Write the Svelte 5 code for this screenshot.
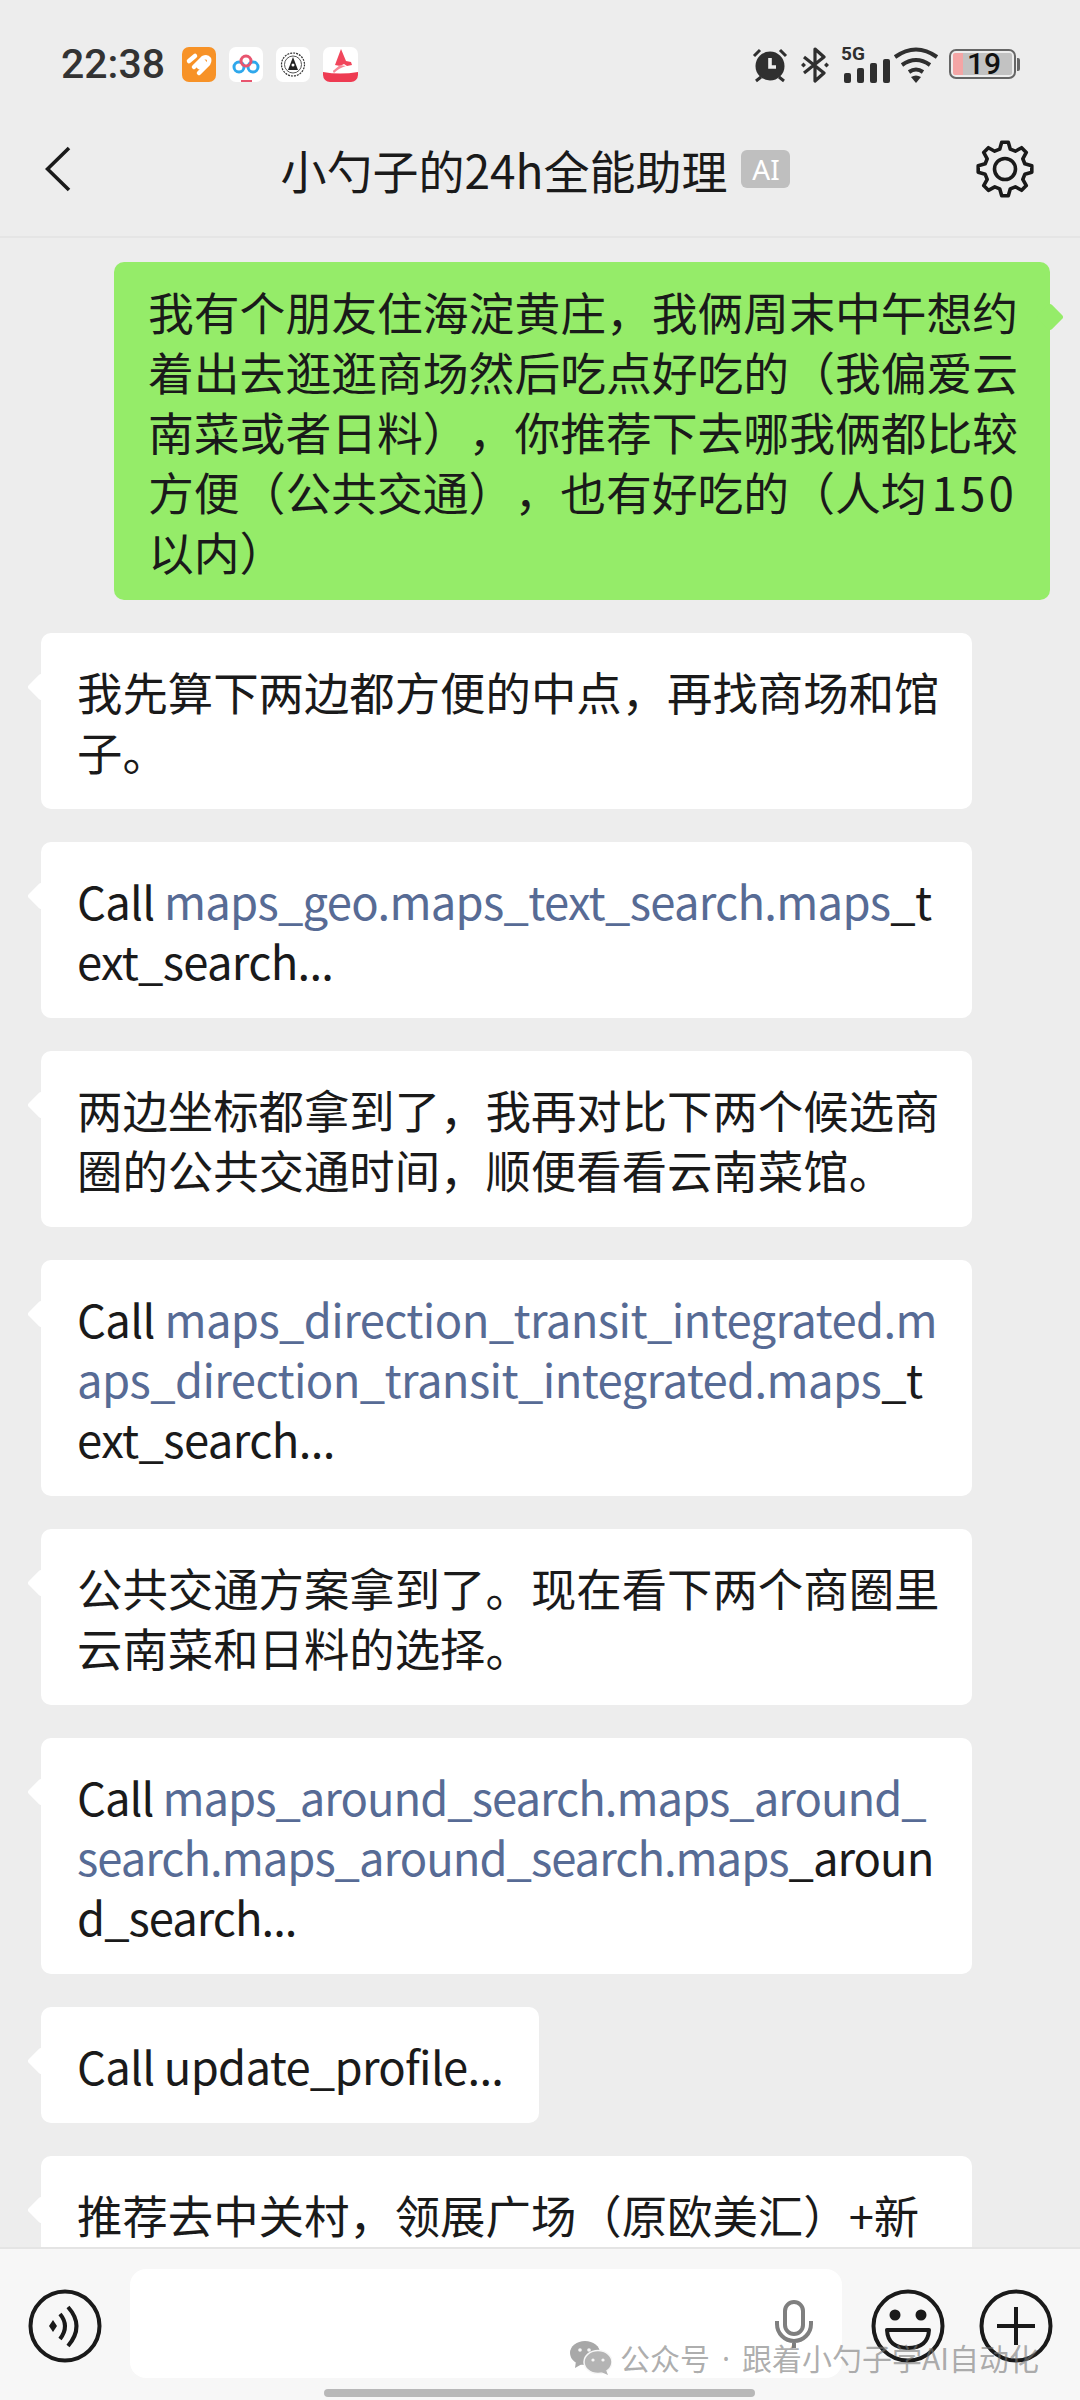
<script>
	const plain = (t) => ({ t, link: false });
	const link = (t) => ({ t, link: true });

	const messages = [
		{ lines: [[plain('我先算下两边都方便的中点，再找商场和馆')], [plain('子。')]] },
		{ lines: [[plain('Call '), link('maps_geo.maps_text_search.maps'), plain('_t')], [plain('ext_search...')]], spacing: 'latin' },
		{ lines: [[plain('两边坐标都拿到了，我再对比下两个候选商')], [plain('圈的公共交通时间，顺便看看云南菜馆。')]] },
		{
			lines: [
				[plain('Call '), link('maps_direction_transit_integrated.m')],
				[link('aps_direction_transit_integrated.maps'), plain('_t')],
				[plain('ext_search...')]
			],
			spacing: 'loose'
		},
		{ lines: [[plain('公共交通方案拿到了。现在看下两个商圈里')], [plain('云南菜和日料的选择。')]] },
		{
			lines: [
				[plain('Call '), link('maps_around_search.maps_around_')],
				[link('search.maps_around_search.maps'), plain('_aroun')],
				[plain('d_search...')]
			],
			spacing: 'tight'
		},
		{ lines: [[plain('Call update_profile...')]], short: true, spacing: 'latin' },
		{ lines: [[plain('推荐去中关村，领展广场（原欧美汇）+新')]] }
	];

	const question = [
		'我有个朋友住海淀黄庄，我俩周末中午想约',
		'着出去逛逛商场然后吃点好吃的（我偏爱云',
		'南菜或者日料），你推荐下去哪我俩都比较'
	];

	// 8 toothed outline for the settings gear
	function gearPath(cx, cy, outer, inner) {
		const pts = [];
		for (let i = 0; i < 8; i++) {
			const a = (i * 45 - 90) * (Math.PI / 180);
			for (const [d, r] of [[-15, inner], [-7, outer], [7, outer], [15, inner]]) {
				const b = a + (d * Math.PI) / 180;
				pts.push(`${(cx + r * Math.cos(b)).toFixed(1)} ${(cy + r * Math.sin(b)).toFixed(1)}`);
			}
		}
		return 'M' + pts.join('L') + 'Z';
	}
</script>

<div class="screen">
	<div class="status">
		<span class="time">22:38</span>
		<div class="apps">
			<svg width="34" height="35" viewBox="0 0 34 35">
				<rect width="34" height="35" rx="7" fill="#f79227" />
				<path d="M7 14l6-5M12 20l9-9q4-2 6 1q1 3-2 6l-8 8M17 20l5-5" fill="none" stroke="#fff" stroke-width="4.5" stroke-linecap="round" />
			</svg>
			<svg width="34" height="35" viewBox="0 0 34 35">
				<rect width="34" height="35" rx="7" fill="#fff" />
				<circle cx="10" cy="20" r="5" fill="none" stroke="#2fa8ec" stroke-width="3" />
				<circle cx="24" cy="20" r="5" fill="none" stroke="#2fa8ec" stroke-width="3" />
				<circle cx="17" cy="14" r="5" fill="none" stroke="#e8556f" stroke-width="3" />
				<rect x="12" y="33" width="11" height="2" fill="#e8556f" />
			</svg>
			<svg width="34" height="35" viewBox="0 0 34 35">
				<rect width="34" height="35" rx="7" fill="#fff" />
				<circle cx="17" cy="17.5" r="11.5" fill="none" stroke="#333" stroke-width="1.2" stroke-dasharray="2 1" />
				<circle cx="17" cy="17.5" r="8.5" fill="none" stroke="#555" stroke-width="1" />
				<path d="M17 10l5 13H12z" fill="#222" />
				<circle cx="17" cy="18" r="1.5" fill="#fff" />
			</svg>
			<svg width="35" height="35" viewBox="0 0 35 35">
				<rect width="35" height="35" rx="7" fill="#fff" />
				<path d="M18 2l5 12 5 1 1 3-5 1-3-2-4 2-5-1z" fill="#f1465c" />
				<path d="M17 18l6 1q-7 2-12 7-2-2 0-3z" fill="#f78a98" />
				<path d="M0 25q17 3 35 0v3a7 7 0 0 1-7 7H7a7 7 0 0 1-7-7z" fill="#ee3b52" />
			</svg>
		</div>
		<div class="sys">
			<svg class="alarm" width="36" height="36" viewBox="0 0 36 36">
				<circle cx="18" cy="19" r="14.5" fill="#2f2f2f" />
				<path d="M18 11v9h6" fill="none" stroke="#eee" stroke-width="3.6" />
				<path d="M2 9l6-6M34 9l-6-6M4 34l5-4M32 34l-5-4" stroke="#2f2f2f" stroke-width="3" fill="none" />
			</svg>
			<svg class="bt" width="30" height="36" viewBox="0 0 30 36">
				<path d="M4 10l20 16-9 8V2l9 8L4 26" fill="none" stroke="#2f2f2f" stroke-width="3.2" stroke-linejoin="round" />
				<path d="M1 18l2.5-2.5L6 18l-2.500 2.500zM24 18l2.500-2.500L29 18l-2.500 2.500z" fill="#2f2f2f" />
			</svg>
			<div class="signal">
				<span class="g5">5G</span>
				<div class="bars"><i class="b1"></i><i class="b2"></i><i class="b3"></i><i class="b4"></i></div>
			</div>
			<svg class="wifi" width="46" height="36" viewBox="0 0 46 36">
				<path d="M2 10q21-15 42 0M9 18q14-10 28 0M16 25q7-5 14 0" fill="none" stroke="#2f2f2f" stroke-width="4" />
				<path d="M18 30q5-3 10 0l-5 6z" fill="#2f2f2f" />
			</svg>
			<div class="battery">
				<div class="shell">
					<div class="low"></div>
					<div class="rest"></div>
					<span>19</span>
				</div>
				<div class="tip"></div>
			</div>
		</div>
	</div>

	<header>
		<svg class="back" width="26" height="46" viewBox="0 0 26 46">
			<path d="M24 2L2.500 23 24 44" fill="none" stroke="#1a1a1a" stroke-width="3.600" />
		</svg>
		<div class="title">
			<span>小勺子的24h全能助理</span>
			<b>AI</b>
		</div>
		<svg class="gear" width="58" height="58" viewBox="0 0 58 58">
			<path d={gearPath(29, 29, 27, 20.5)} fill="none" stroke="#1a1a1a" stroke-width="3.600" stroke-linejoin="round" />
			<circle cx="29" cy="29" r="10.500" fill="none" stroke="#1a1a1a" stroke-width="3.600" />
		</svg>
	</header>

	<main>
		<div class="bubble mine">
			{#each question as line}
				<div class="line">{line}</div>
			{/each}
			<div class="line">方便（公共交通），也有好吃的（人均<span class="num">150</span></div>
			<div class="line">以内）</div>
		</div>

		{#each messages as msg}
			<div class="bubble {msg.spacing ?? ''}" class:short={msg.short}>
				{#each msg.lines as line}
					<div class="line">
						{#each line as seg}<span class:link={seg.link}>{seg.t}</span>{/each}
					</div>
				{/each}
			</div>
		{/each}
	</main>

	<footer>
		<svg width="74" height="74" viewBox="0 0 74 74">
			<circle cx="37" cy="37" r="34.500" fill="none" stroke="#1a1a1a" stroke-width="4" />
			<path d="M21 37l4-6 4 6-4 6z" fill="#1a1a1a" />
			<path d="M32 25q10 12 0 25M40 18q17 19 0 39" fill="none" stroke="#1a1a1a" stroke-width="4" />
		</svg>
		<div class="input">
			<svg width="38" height="48" viewBox="0 0 38 48">
				<rect x="10" y="2" width="18" height="32" rx="9" fill="none" stroke="#7f7f7f" stroke-width="4" />
				<path d="M2 21v3a17 17 0 0 0 34 0v-3M19 41v7" fill="none" stroke="#7f7f7f" stroke-width="4" />
			</svg>
		</div>
		<svg class="emoji" width="74" height="74" viewBox="0 0 74 74">
			<circle cx="37" cy="37" r="34.500" fill="none" stroke="#1a1a1a" stroke-width="4" />
			<circle cx="24" cy="26" r="5.500" fill="#1a1a1a" />
			<circle cx="50" cy="26" r="5.500" fill="#1a1a1a" />
			<path d="M16 41h42q-1 18-21 18T16 41z" fill="none" stroke="#1a1a1a" stroke-width="4" stroke-linejoin="round" />
		</svg>
		<svg class="plus" width="74" height="74" viewBox="0 0 74 74">
			<circle cx="37" cy="37" r="34.500" fill="none" stroke="#1a1a1a" stroke-width="4" />
			<path d="M18 37h38M37 18v38" fill="none" stroke="#1a1a1a" stroke-width="4" />
		</svg>
		<div class="home"></div>
		<div class="mark">
			<svg width="42" height="34" viewBox="0 0 42 34">
				<ellipse cx="15" cy="12" rx="15" ry="12" fill="#a8a8a8" />
				<path d="M6 20l-1 7 7-4z" fill="#a8a8a8" />
				<ellipse cx="28" cy="21" rx="14" ry="11.500" fill="#b4b4b4" stroke="#f7f7f7" stroke-width="1.500" />
				<path d="M36 29l2 5-7-3z" fill="#b4b4b4" />
				<circle cx="10" cy="9" r="1.800" fill="#f7f7f7" />
				<circle cx="19" cy="9" r="1.800" fill="#f7f7f7" />
				<circle cx="23" cy="19" r="1.600" fill="#f7f7f7" />
				<circle cx="33" cy="19" r="1.600" fill="#f7f7f7" />
			</svg>
			<span>公众号<span class="dot">·</span>跟着小勺子学AI自动化</span>
		</div>
	</footer>
</div>

<style>
	:global(body) {
		margin: 0;
		background: #ededed;
	}

	.screen {
		width: 1080px;
		height: 2400px;
		display: flex;
		flex-direction: column;
		overflow: hidden;
		background: #ededed;
		color: #1a1a1a;
		font-family: 'Noto Sans CJK SC', 'Noto Sans', sans-serif;
		text-spacing-trim: space-all;
	}

	.status {
		height: 106px;
		flex: none;
		display: flex;
		align-items: flex-start;
		padding: 47px 60px 0 61px;
		box-sizing: border-box;
	}

	.time {
		font-family: Roboto, sans-serif;
		font-size: 41px;
		font-weight: 500;
		line-height: 35px;
		color: #333;
		width: 121px;
	}

	.apps {
		display: flex;
		gap: 13px;
	}

	.apps svg {
		display: block;
	}

	.sys {
		margin-left: auto;
		display: flex;
		align-items: flex-start;
		color: #2f2f2f;
	}

	.alarm {
		margin-left: -2px;
	}

	.bt {
		margin-left: 12px;
	}

	.signal {
		margin-left: 12px;
		width: 42px;
		height: 36px;
		position: relative;
	}

	.g5 {
		position: absolute;
		left: -1px;
		top: 0;
		font-family: Roboto, sans-serif;
		font-weight: 700;
		font-size: 19px;
		line-height: 14px;
	}

	.bars {
		position: absolute;
		left: 2px;
		bottom: 0;
		display: flex;
		align-items: flex-end;
		gap: 6px;
	}

	.bars i {
		display: block;
		width: 7px;
		background: #2f2f2f;
		border-radius: 2px;
	}

	.b1 {
		height: 10px;
	}
	.b2 {
		height: 15px;
	}
	.b3 {
		height: 20px;
	}
	.b4 {
		height: 24px;
	}

	.wifi {
		margin-left: 9px;
	}

	.battery {
		margin-left: 10px;
		display: flex;
		align-items: center;
		height: 32px;
		margin-top: 1px;
	}

	.shell {
		width: 67px;
		height: 30px;
		border: 2px solid #666;
		border-radius: 7px;
		box-sizing: border-box;
		padding: 2px;
		display: flex;
		position: relative;
	}

	.low {
		width: 10px;
		background: #f4a5a5;
		border-radius: 2px 0 0 2px;
	}

	.rest {
		flex: 1;
		background: #c2c2c2;
		border-radius: 0 2px 2px 0;
	}

	.shell span {
		position: absolute;
		left: 16px;
		top: 0;
		font-family: Roboto, sans-serif;
		font-weight: 500;
		font-size: 30px;
		line-height: 26px;
		color: #111;
	}

	.tip {
		width: 3px;
		height: 13px;
		background: #666;
		margin-left: 1px;
		border-radius: 0 2px 2px 0;
	}

	header {
		height: 132px;
		flex: none;
		box-sizing: border-box;
		border-bottom: 2px solid #e5e5e5;
		display: flex;
		align-items: center;
		justify-content: space-between;
		padding: 0 46px 0 45px;
	}

	header svg {
		display: block;
	}

	.back {
		margin-top: -4px;
	}

	.gear {
		margin-top: -4px;
	}

	.title {
		display: flex;
		align-items: center;
		gap: 14px;
		margin-top: -4px;
		margin-left: 24px;
	}

	.title span {
		font-size: 46px;
		line-height: 60px;
	}

	.title b {
		width: 49px;
		height: 38px;
		border-radius: 6px;
		background: #bfbfbf;
		color: #fff;
		font-family: 'Noto Sans', sans-serif;
		font-weight: 400;
		font-size: 28px;
		line-height: 38px;
		text-align: center;
	}

	main {
		flex: 1;
		min-height: 0;
		overflow: hidden;
		display: flex;
		flex-direction: column;
		align-items: flex-start;
		gap: 33px;
		padding: 24px 0 0 41px;
	}

	.bubble {
		position: relative;
		flex: none;
		box-sizing: border-box;
		width: 931px;
		padding: 28px 36px;
		background: #fff;
		border-radius: 10px;
		font-size: 45.4px;
		line-height: 60px;
		white-space: nowrap;
	}

	.bubble::before {
		content: '';
		position: absolute;
		left: -10px;
		top: 44px;
		width: 20px;
		height: 20px;
		background: inherit;
		transform: rotate(45deg);
		border-radius: 3px;
	}

	.latin {
		letter-spacing: -0.72px;
	}

	.loose {
		letter-spacing: -0.6px;
	}

	.tight {
		letter-spacing: -1px;
	}

	.short {
		width: auto;
	}

	.mine {
		width: 936px;
		margin-left: 73px;
		padding: 19px 34px;
		background: #95ec69;
		font-size: 45.8px;
	}

	.mine::before {
		left: auto;
		right: -10px;
		top: 45px;
	}

	.num {
		margin-left: 5px;
		letter-spacing: 3px;
	}

	.link {
		color: #576b95;
	}

	footer {
		height: 153px;
		flex: none;
		box-sizing: border-box;
		border-top: 2px solid #e4e4e4;
		background: #f7f7f7;
		display: flex;
		align-items: flex-start;
		padding: 20px 27px 0 28px;
		position: relative;
	}

	footer svg {
		display: block;
		flex: none;
	}

	footer > svg {
		margin-top: 20px;
	}

	.input {
		width: 712px;
		height: 109px;
		margin-left: 28px;
		background: #fff;
		border-radius: 16px;
		flex: none;
		display: flex;
		align-items: center;
		justify-content: flex-end;
		padding-right: 29px;
		box-sizing: border-box;
	}

	.emoji {
		margin-left: 29px;
	}

	.plus {
		margin-left: 34px;
	}

	.home {
		position: absolute;
		left: 324px;
		width: 431px;
		top: 140px;
		height: 8px;
		border-radius: 4px;
		background: #b8b8b8;
	}

	.mark {
		position: absolute;
		left: 570px;
		top: 90px;
		display: flex;
		align-items: center;
		gap: 8px;
		color: rgba(120, 120, 120, 0.6);
		font-size: 30px;
		line-height: 36px;
		white-space: pre;
	}

	.dot {
		font-family: 'Noto Sans', sans-serif;
		margin: 0 12px;
	}
</style>
